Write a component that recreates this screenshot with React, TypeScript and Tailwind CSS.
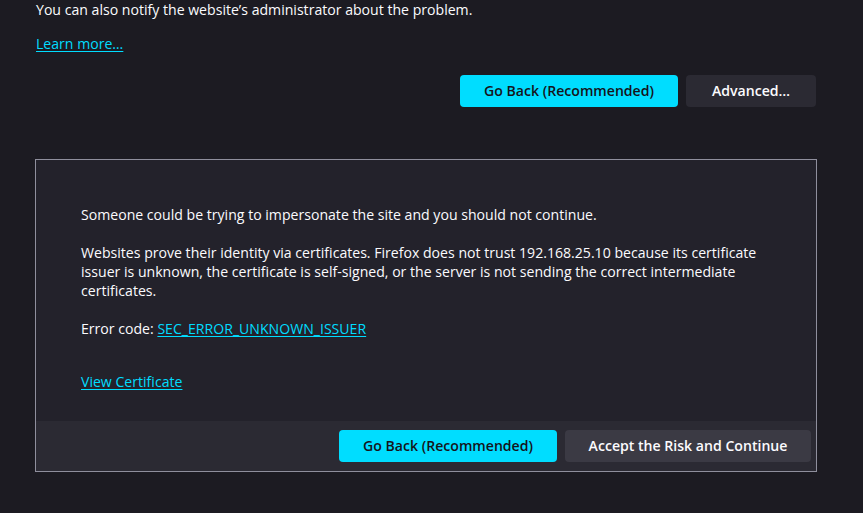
import React from "react";

export default function App() {
  const font = { fontFamily: '"Open Sans", "Noto Sans", sans-serif' };
  return (
    <div className="w-[863px] h-[513px] bg-[#1c1b22] text-[#fbfbfe] overflow-hidden text-[14.1px]" style={font}>
      <div className="ml-[35px] w-[782px]">
        <p className="pl-[1px] leading-[20px] pt-0">You can also notify the website’s administrator about the problem.</p>
        <p className="pl-[1px] mt-[14px] leading-[20px]">
          <a className="text-[#00ddff] underline underline-offset-2">Learn more…</a>
        </p>
        <div className="flex justify-end gap-2 mt-[21px] pr-[1px]">
          <button className="h-[32px] w-[218px] rounded bg-[#00ddff] text-[#15141a] font-semibold">Go Back (Recommended)</button>
          <button className="h-[32px] w-[130px] rounded bg-[#2b2a33] text-[#fbfbfe] font-semibold">Advanced…</button>
        </div>
        <div className="mt-[52px] border border-[#8f8f9d] bg-[#23222b]">
          <div className="pl-[45px] pr-[40px] pt-[45px] pb-[30px] leading-[19px]">
            <p>Someone could be trying to impersonate the site and you should not continue.</p>
            <p className="mt-[19px]">
              Websites prove their identity via certificates. Firefox does not trust 192.168.25.10 because its certificate issuer is unknown, the certificate is self-signed, or the server is not sending the correct intermediate certificates.
            </p>
            <p className="mt-[19px]">
              Error code: <a className="text-[#00ddff] underline underline-offset-2">SEC_ERROR_UNKNOWN_ISSUER</a>
            </p>
            <p className="mt-[34px]">
              <a className="text-[#00ddff] underline underline-offset-2">View Certificate</a>
            </p>
          </div>
          <div className="bg-[#2b2a33] flex justify-end gap-2 pt-[9px] pb-[9px] pr-[5px]">
            <button className="h-[32px] w-[218px] rounded bg-[#00ddff] text-[#15141a] font-semibold">Go Back (Recommended)</button>
            <button className="h-[32px] w-[246px] rounded bg-[#3b3a44] text-[#fbfbfe] font-semibold">Accept the Risk and Continue</button>
          </div>
        </div>
      </div>
    </div>
  );
}
